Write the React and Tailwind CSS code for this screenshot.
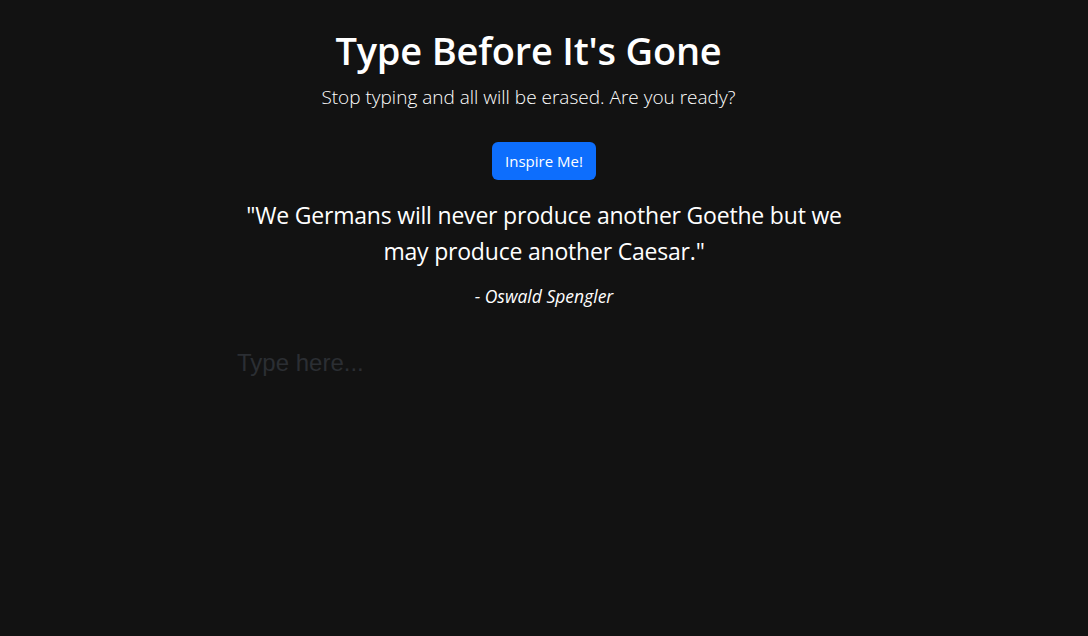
export default function App() {
  return (
    <div
      className="min-h-[636px] w-full bg-[#121212] text-white"
      style={{ fontFamily: '"Open Sans", "Noto Sans", sans-serif' }}
    >
      <div className="mx-auto w-[620px] flex flex-col items-center pt-[26px]">
        {/* 헤더 */}
        <div className="flex flex-col items-center mr-[31px]">
          <h1 className="text-[38px] leading-[48px] font-semibold tracking-[-0.2px]">Type Before It's Gone</h1>
          <p className="mt-[8px] text-[19px] leading-[30px] font-light text-white">
            Stop typing and all will be erased. Are you ready?
          </p>
        </div>

        <button className="mt-[30px] h-[38px] w-[104px] rounded-[6px] bg-[#0d6efd] text-[15px] text-white">
          Inspire Me!
        </button>

        {/* 인용문 */}
        <p className="mt-[17px] w-[610px] text-center text-[23px] leading-[36px] tracking-[-0.2px]">
          "We Germans will never produce another Goethe but we may produce another Caesar."
        </p>
        <p className="mt-[14px] text-[17.5px] leading-[27px] italic">- Oswald Spengler</p>

        <textarea
          placeholder="Type here..."
          className="mt-[33px] h-[240px] w-full resize-none bg-transparent px-[3px] py-[2px] text-[24px] text-white outline-none placeholder:text-[#2b2e33]"
          style={{ fontFamily: '"Liberation Sans", Arial, sans-serif' }}
        />
      </div>
    </div>
  )
}
